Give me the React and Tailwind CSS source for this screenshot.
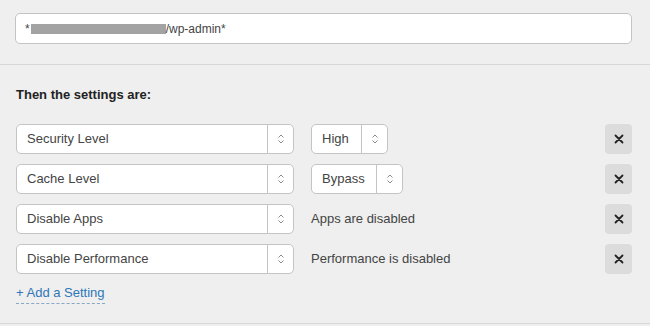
import React from "react";

const Arrows = () => (
  <svg width="8" height="12" viewBox="0 0 8 12" className="text-[#8a8a8a]">
    <path d="M1.5 4.5 L4 2 L6.5 4.5" fill="none" stroke="currentColor" strokeWidth="1" />
    <path d="M1.5 7.5 L4 10 L6.5 7.5" fill="none" stroke="currentColor" strokeWidth="1" />
  </svg>
);

const Select = ({ label, w }) => (
  <div className={`flex h-[30px] ${w} bg-white border border-[#c4c4c4] rounded-[5px] text-[13px] text-[#444]`}>
    <div className="flex-1 flex items-center pl-[10px]">{label}</div>
    <div className="w-[26px] border-l border-[#c4c4c4] flex items-center justify-center">
      <Arrows />
    </div>
  </div>
);

const XBtn = () => (
  <div className="w-[27px] h-[30px] rounded-[4px] bg-[#dcdcdc] flex items-center justify-center">
    <svg width="10" height="10" viewBox="0 0 10 10">
      <path d="M1.5 1.5 L8.5 8.5 M8.5 1.5 L1.5 8.5" stroke="#222" strokeWidth="1.8" strokeLinecap="round" />
    </svg>
  </div>
);

const Row = ({ label, right }) => (
  <div className="flex items-center h-[30px]">
    <Select label={label} w="w-[278px]" />
    <div className="ml-[17px] flex-1 flex items-center">{right}</div>
    <XBtn />
  </div>
);

export default function App() {
  return (
    <div className="w-[650px] h-[326px] bg-[#eeefee] overflow-hidden" style={{ fontFamily: '"Liberation Sans", Arial, sans-serif' }}>
      <div className="pt-[13px] pl-[15px] pr-[18px] pb-[20px] border-b border-[#d8d8d8]">
        <div className="h-[31px] bg-white border border-[#c4c4c4] rounded-[5px] flex items-center pl-[9px] text-[12px] text-[#444]">
          <span>*</span>
          <span className="inline-block w-[135px] h-[10px] bg-[#a3a3a3] ml-[1px]" />
          <span>/wp-admin*</span>
        </div>
      </div>
      <div className="pl-[16px] pr-[18px] pt-[21px] h-[259px] border-b border-[#d8d8d8]">
        <div className="text-[13px] font-bold text-[#222] h-[17px] leading-[17px]">Then the settings are:</div>
        <div className="mt-[21px] flex flex-col gap-[10px]">
          <Row label="Security Level" right={<Select label="High" w="w-[77px]" />} />
          <Row label="Cache Level" right={<Select label="Bypass" w="w-[92px]" />} />
          <Row label="Disable Apps" right={<span className="text-[13px] text-[#444]">Apps are disabled</span>} />
          <Row label="Disable Performance" right={<span className="text-[13px] text-[#444]">Performance is disabled</span>} />
        </div>
        <div className="mt-[6px]">
          <span className="text-[13px] text-[#2f77b8] border-b border-dashed border-[#8aa7c4] pb-[3px]">+ Add a Setting</span>
        </div>
      </div>
    </div>
  );
}
